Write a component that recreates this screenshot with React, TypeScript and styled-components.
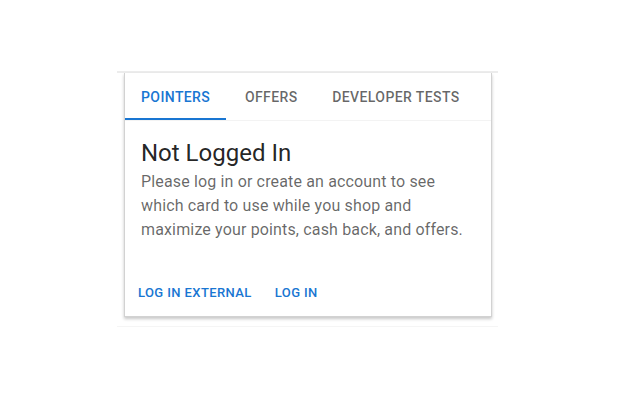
import React, { useState } from "react";
import styled, { createGlobalStyle } from "styled-components";

const GlobalStyle = createGlobalStyle`
  html, body {
    margin: 0;
    padding: 0;
    background: #ffffff;
    font-family: Roboto, "Liberation Sans", Arial, sans-serif;
  }
`;

const TABS = ["Pointers", "Offers", "Developer Tests"];

export default function App() {
  const [active, setActive] = useState(0);

  return (
    <>
      <GlobalStyle />
      <StyledStage>
        <StyledFrame>
          <StyledCard>
            <StyledTabBar>
              {TABS.map((label, index) => (
                <StyledTab
                  key={label}
                  $active={index === active}
                  onClick={() => setActive(index)}
                >
                  {label}
                </StyledTab>
              ))}
            </StyledTabBar>

            <StyledContent>
              <h5>Not Logged In</h5>
              <p>
                Please log in or create an account to see which card to use
                while you shop and maximize your points, cash back, and
                offers.
              </p>
            </StyledContent>

            <StyledActions>
              <StyledButton>Log In External</StyledButton>
              <StyledButton>Log In</StyledButton>
            </StyledActions>
          </StyledCard>
        </StyledFrame>
      </StyledStage>
    </>
  );
}

const StyledStage = styled.div`
  width: 640px;
  height: 400px;
  padding: 71px 0 0 117px;
  box-sizing: border-box;
`;

const StyledFrame = styled.div`
  width: 381px;
  box-sizing: border-box;
  padding: 0 6px 9px 7px;
  border-top: 2px solid #ececec;
  border-bottom: 1px solid #f5f5f5;
`;

const StyledCard = styled.div`
  width: 368px;
  box-sizing: border-box;
  background: #ffffff;
  border: 1px solid #d2d2d2;
  border-top: none;
  box-shadow: 0 2px 3px rgba(0, 0, 0, 0.22);
`;

const StyledTabBar = styled.div`
  display: flex;
  height: 47px;
  border-bottom: 1px solid #f3f3f3;
`;

const StyledTab = styled.button<{ $active: boolean }>`
  min-width: 90px;
  padding: 0 16px;
  border: none;
  background: none;
  cursor: pointer;
  font-family: Roboto, "Liberation Sans", Arial, sans-serif;
  font-size: 14px;
  font-weight: 500;
  letter-spacing: 0.4px;
  text-transform: uppercase;
  color: ${(p) => (p.$active ? "#1976d2" : "rgba(0, 0, 0, 0.6)")};
  box-shadow: ${(p) => (p.$active ? "inset 0 -2px 0 #1976d2" : "none")};
`;

const StyledContent = styled.div`
  padding: 16px 16px 27px;

  h5 {
    margin: 0;
    font-size: 24px;
    font-weight: 400;
    line-height: 33px;
    color: rgba(0, 0, 0, 0.87);
  }

  p {
    margin: 0;
    font-size: 16px;
    line-height: 24px;
    letter-spacing: 0.15px;
    color: rgba(0, 0, 0, 0.6);
  }
`;

const StyledActions = styled.div`
  display: flex;
  align-items: center;
  gap: 7px;
  padding: 8px 5px 9px;
`;

const StyledButton = styled.button`
  height: 30px;
  padding: 0 8px;
  border: none;
  border-radius: 4px;
  background: none;
  cursor: pointer;
  font-family: Roboto, "Liberation Sans", Arial, sans-serif;
  font-size: 13px;
  font-weight: 500;
  letter-spacing: 0.4px;
  text-transform: uppercase;
  color: #1976d2;
`;
